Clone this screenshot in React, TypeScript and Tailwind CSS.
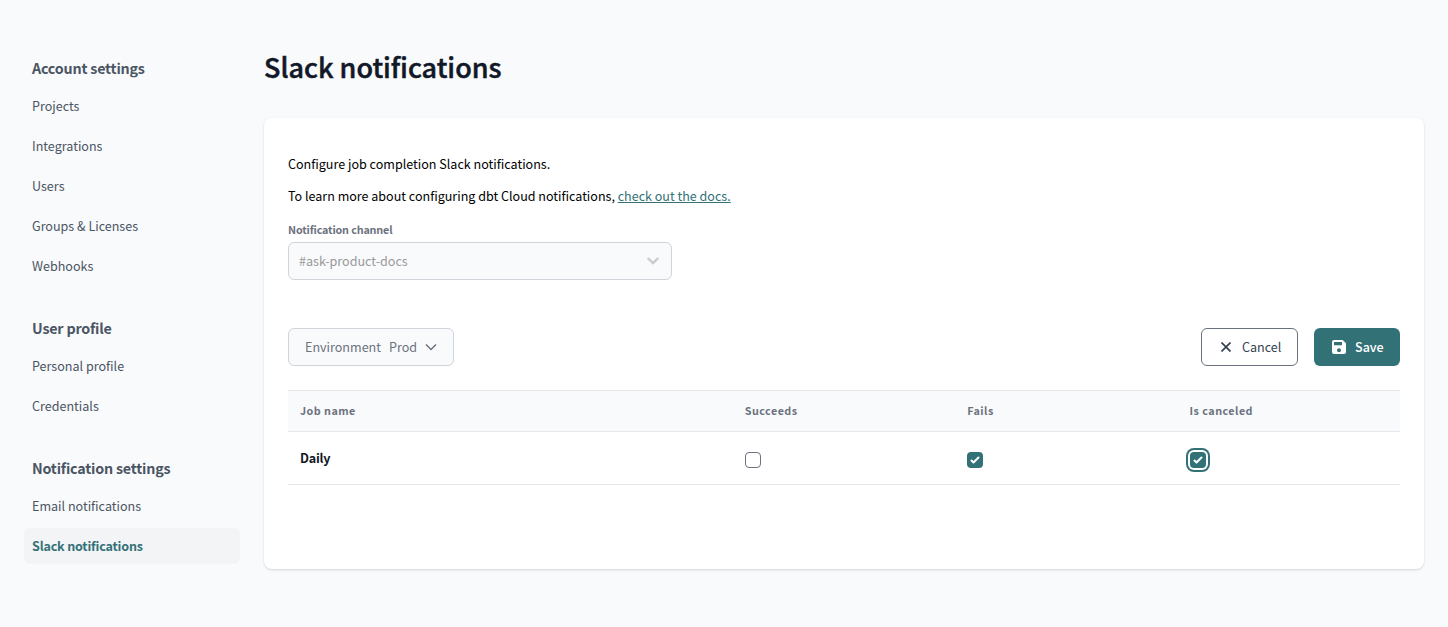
import { useState } from 'react';

type Section = { title: string; items: string[] };

const sections: Section[] = [
  { title: 'Account settings', items: ['Projects', 'Integrations', 'Users', 'Groups & Licenses', 'Webhooks'] },
  { title: 'User profile', items: ['Personal profile', 'Credentials'] },
  { title: 'Notification settings', items: ['Email notifications', 'Slack notifications'] },
];

function Sidebar() {
  return (
    <nav className="flex w-[216px] shrink-0 flex-col gap-7 pt-2">
      {sections.map((section) => (
        <div key={section.title} className="flex flex-col gap-1">
          <h2 className="flex h-8 items-center px-2 text-[14.3px] leading-5 font-bold tracking-[-0.2px] text-[#4b5563]">{section.title}</h2>
          {section.items.map((item) => (
            <a
              key={item}
              href="#"
              className={
                item === 'Slack notifications'
                  ? 'flex h-9 items-center rounded-md bg-[#f3f4f6] px-2 text-[12.55px] leading-5 font-bold tracking-[-0.18px] text-[#327176]'
                  : 'flex h-9 items-center rounded-md px-2 text-[12.55px] leading-5 text-[#4b5563]'
              }
            >
              {item}
            </a>
          ))}
        </div>
      ))}
    </nav>
  );
}

function Checkbox({ label, initial, focused }: { label: string; initial: boolean; focused?: boolean }) {
  const [checked, setChecked] = useState(initial);
  return (
    <button
      role="checkbox"
      aria-checked={checked}
      aria-label={label}
      onClick={() => setChecked(!checked)}
      className={
        (checked
          ? 'block size-4 rounded-[4px] bg-[#327176] text-white'
          : 'block size-4 rounded-[4px] border border-[#6b7280] bg-white') +
        (focused ? ' shadow-[0_0_0_2px_#fff,0_0_0_4px_#327176]' : '')
      }
    >
      {checked && (
        <svg viewBox="0 0 16 16" className="size-4" fill="currentColor">
          <path d="M12.207 4.793a1 1 0 0 1 0 1.414l-5 5a1 1 0 0 1-1.414 0l-2-2a1 1 0 0 1 1.414-1.414L6.5 9.086l4.293-4.293a1 1 0 0 1 1.414 0z" />
        </svg>
      )}
    </button>
  );
}

function JobTable() {
  return (
    <div className="mt-6 border-b border-[#e5e7eb]">
      <div className="grid h-[42px] grid-cols-[2fr_1fr_1fr_1fr] items-center border-y border-[#e5e7eb] bg-[#f9fafb] text-[10.75px] leading-4 font-bold tracking-[0.47px] text-[#6b7280]">
        <div className="px-3">Job name</div>
        <div className="px-3">Succeeds</div>
        <div className="px-3">Fails</div>
        <div className="px-3">Is canceled</div>
      </div>
      <div className="grid h-[52px] grid-cols-[2fr_1fr_1fr_1fr] items-start">
        <div className="px-3 pt-4 text-[12.55px] leading-5 font-bold tracking-[-0.2px] text-[#111827]">Daily</div>
        <div className="px-3 pt-5"><Checkbox label="Daily succeeds" initial={false} /></div>
        <div className="px-3 pt-5"><Checkbox label="Daily fails" initial /></div>
        <div className="px-3 pt-5"><Checkbox label="Daily is canceled" initial focused /></div>
      </div>
    </div>
  );
}

export default function App() {
  return (
    <div className="flex h-[627px] gap-6 bg-[#f9fafc] px-6 pt-11 font-['Noto_Sans_CJK_SC','Noto_Sans',sans-serif]">
      <Sidebar />
      <main className="min-w-0 flex-1">
        <h1 className="pt-[3px] text-[27px] leading-10 font-medium [-webkit-text-stroke:0.5px] text-[#111827]">Slack notifications</h1>
        <section className="mt-[31px] h-[451px] rounded-lg bg-white px-6 pt-9 shadow-[0_1px_3px_rgba(0,0,0,0.1),0_1px_2px_rgba(0,0,0,0.06)]">
          <p className="text-[12.55px] leading-5 text-black">Configure job completion Slack notifications.</p>
          <p className="mt-3 text-[12.54px] leading-5 text-black">
            To learn more about configuring dbt Cloud notifications,{' '}
            <a href="#" className="text-[#327176] underline">check out the docs.</a>
          </p>
          <div className="mt-4 text-[10.75px] leading-4 font-bold tracking-[-0.15px] text-[#6b7280]">Notification channel</div>
          <div className="mt-1 flex h-[38px] w-96 items-center justify-between rounded-md border border-[#d1d5db] bg-[#f9fafb] pr-3 pl-2.5 text-[12.55px] leading-5 text-[#999999]">
            <span>#ask-product-docs</span>
            <svg viewBox="0 0 12 8" className="h-2 w-3 text-[#cccccc]" fill="none" stroke="currentColor" strokeWidth="2.4" strokeLinecap="round">
              <path d="M1.4 1.7 6 6.1 10.6 1.7" />
            </svg>
          </div>
          <div className="mt-12 flex items-center justify-between">
            <button className="flex h-[38px] w-[166px] items-center rounded-md border border-[#d1d5db] bg-[#f9fafb] px-4 text-[12.55px] leading-5 text-[#6b7280]">
              <span>Environment</span>
              <span className="ml-2">Prod</span>
              <svg viewBox="0 0 12 12" className="ml-2 size-3 shrink-0" fill="none" stroke="currentColor" strokeWidth="1.5">
                <path d="M1 3.5 6 8.5 11 3.5" />
              </svg>
            </button>
            <div className="flex gap-4">
              <button className="flex h-[38px] w-[97px] items-center rounded-md border border-[#6b7280] bg-white pl-[19px] text-[12.55px] leading-5 text-[#374151]">
                <svg viewBox="0 0 10 10" className="mr-[11px] size-2.5" fill="none" stroke="currentColor" strokeWidth="1.7">
                  <path d="M.5 .5 9.5 9.5M9.5 .5 .5 9.5" />
                </svg>
                Cancel
              </button>
              <button className="flex h-[38px] w-[86px] items-center rounded-md bg-[#327176] pl-[18px] text-[12.55px] leading-5 font-medium text-white">
                <svg viewBox="0 0 14 14" className="mr-[9px] size-3.5" fill="currentColor" fillRule="evenodd">
                  <path d="M2 0h8.7L14 3.3V12a2 2 0 0 1-2 2H2a2 2 0 0 1-2-2V2a2 2 0 0 1 2-2zM2 2v3.2h8V2zM7 8.2a2 2 0 1 0 0 4 2 2 0 0 0 0-4z" />
                </svg>
                Save
              </button>
            </div>
          </div>
          <JobTable />
        </section>
      </main>
    </div>
  );
}
